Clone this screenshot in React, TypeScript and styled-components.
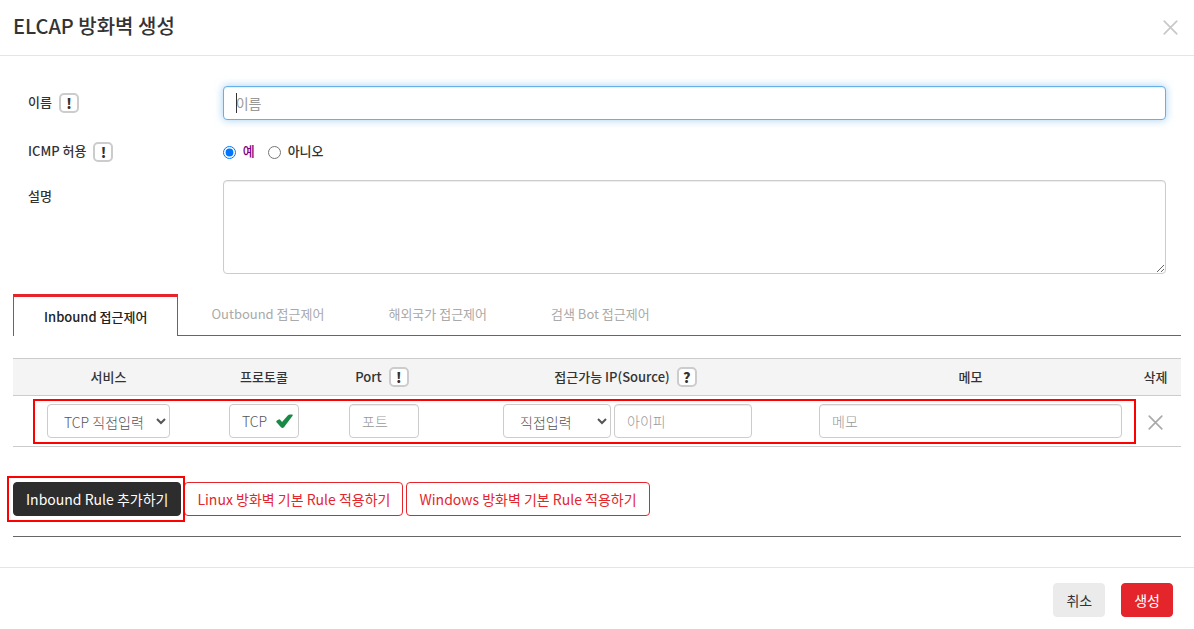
import React, { useState } from "react";
import styled, { createGlobalStyle, css } from "styled-components";

const GlobalStyle = createGlobalStyle`
  *, *::before, *::after { box-sizing: border-box; }
  body { margin: 0; background: #fff; }
  body, button, input, select, textarea {
    font-family: "Noto Sans CJK KR", "Noto Sans", sans-serif;
    color: #333;
  }
`;

const Dialog = styled.form`
  margin: 0;
  font-size: 13px;
  line-height: 20px;
`;

const Header = styled.header`
  display: flex;
  justify-content: space-between;
  align-items: flex-start;
  height: 56px;
  padding: 12px 16px 0 13px;
  border-bottom: 1px solid #e5e5e5;
`;

const Title = styled.h1`
  margin: 0;
  font-size: 20px;
  line-height: 28px;
  font-weight: 500;
`;

const IconButton = styled.button`
  display: inline-flex;
  padding: 0;
  border: 0;
  background: none;
  vertical-align: middle;
  cursor: pointer;
`;

const CloseButton = styled(IconButton)`
  margin-top: 8px;
`;

const Body = styled.main`
  padding: 30px 13px;
`;

const FormRow = styled.div<{ $gap: number }>`
  display: grid;
  grid-template-columns: 2fr 10fr;
  margin-bottom: ${(p) => p.$gap}px;
`;

const LabelCell = styled.div`
  display: flex;
  align-items: center;
  align-self: start;
  height: 34px;
  padding: 0 15px;
  gap: 7px;
  font-weight: 500;
  > :first-child { padding-bottom: 2px; }
`;

const ControlCell = styled.div`
  position: relative;
  display: flex;
  align-items: center;
  padding: 0 15px;
`;

const Badge = styled.span`
  display: inline-flex;
  align-items: center;
  justify-content: center;
  width: 20px;
  height: 20px;
  border: 2px solid #ccc;
  border-radius: 5px;
  background: #fff;
  font-size: 14px;
  line-height: 16px;
  font-weight: 900;
`;

const field = css`
  height: 34px;
  padding: 6px 12px;
  border: 1px solid #ccc;
  border-radius: 4px;
  background: #fff;
  font-size: 14px;
  line-height: 20px;
  font-weight: 300;
  color: #555;
`;

const TextField = styled.input<{ $width?: string }>`
  ${field}
  width: ${(p) => p.$width ?? "100%"};
  box-shadow: inset 0 1px 1px rgba(0, 0, 0, 0.075);
  &::placeholder { color: #999; opacity: 1; }
  &:focus {
    outline: 0;
    border-color: #66afe9;
    box-shadow: inset 0 1px 1px rgba(0, 0, 0, 0.075), 0 0 8px rgba(102, 175, 233, 0.6);
  }
`;

const NameField = styled(TextField)`
  caret-color: transparent;
  &::placeholder { color: #999; font-weight: 400; }
  &:not(:placeholder-shown) { caret-color: auto; }
`;

const Caret = styled.span`
  position: absolute;
  top: 7px;
  left: 28px;
  width: 1px;
  height: 20px;
  background: #333;
  visibility: hidden;
  pointer-events: none;
  ${NameField}:focus:placeholder-shown + & { visibility: visible; }
`;

const TextArea = styled.textarea`
  ${field}
  width: 100%;
  height: 94px;
  box-shadow: inset 0 1px 1px rgba(0, 0, 0, 0.075);
  resize: both;
`;

const Select = styled.select<{ $width: string }>`
  ${field}
  width: ${(p) => p.$width};
  padding-right: 0;
`;

const RadioGroup = styled.div`
  display: flex;
  gap: 13px;
  padding-bottom: 2px;
`;

const RadioLabel = styled.label<{ $on: boolean }>`
  display: flex;
  align-items: center;
  gap: 7px;
  font-weight: 500;
  color: ${(p) => (p.$on ? "#800080" : "#333")};
  input { width: 13px; height: 13px; margin: 2px 0 0; }
`;

const Tabs = styled.div`
  display: flex;
  align-items: flex-start;
  gap: 2px;
  height: 42px;
  margin-bottom: 22px;
  border-bottom: 1px solid #666;
`;

const Tab = styled.button<{ $active: boolean }>`
  height: ${(p) => (p.$active ? 42 : 40)}px;
  padding: 0 30px;
  border: 1px solid transparent;
  background: #fff;
  font-size: 13px;
  line-height: 20px;
  font-weight: 400;
  color: #aaa;
  cursor: pointer;
  ${(p) =>
    p.$active &&
    css`
      border: solid #666;
      border-width: 3px 1px 0;
      border-top-color: #e6252b;
      font-weight: 500;
      color: #222;
    `}
`;

const TableWrap = styled.div`
  position: relative;
  margin-bottom: 35px;
`;

const Table = styled.table`
  width: 100%;
  table-layout: fixed;
  border-collapse: separate;
  border-spacing: 0;
  text-align: center;
  th {
    height: 38px;
    padding: 0;
    border: solid #ccc;
    border-width: 1px 0;
    background: #f4f4f4;
    font-weight: 500;
  }
  td {
    height: 51px;
    padding: 0 8px;
    border-bottom: 1px solid #ccc;
  }
`;

const HeadCell = styled.span`
  display: flex;
  align-items: center;
  justify-content: center;
  gap: 7px;
  padding-right: 4px;
`;

const CellGroup = styled.div`
  display: flex;
  align-items: center;
  justify-content: center;
  gap: 3px;
`;

const Protocol = styled.span`
  ${field}
  display: inline-flex;
  align-items: center;
  justify-content: space-between;
  width: 70px;
  padding: 0 5px 0 12px;
  vertical-align: middle;
`;

const RowHighlight = styled.div`
  position: absolute;
  inset: 41px 45px 3px 20px;
  border: 2px solid #f00;
  pointer-events: none;
`;

const Actions = styled.div`
  display: flex;
  gap: 3px;
  padding-bottom: 20px;
  border-bottom: 1px solid #666;
`;

const Highlighted = styled.span`
  position: relative;
  display: inline-flex;
  &::after {
    content: "";
    position: absolute;
    inset: -6px -4px -6px -6px;
    border: 2px solid #f00;
    pointer-events: none;
    z-index: 1;
  }
`;

const tones = {
  dark: css`background: #2d2d2d; border-color: #2d2d2d; color: #fff;`,
  outline: css`background: #fff; border-color: #e4252b; color: #e4252b;`,
  plain: css`background: #ebebeb; border-color: #ebebeb; color: #333;`,
  primary: css`background: #e4252b; border-color: #e4252b; color: #fff;`,
};

const Button = styled.button<{ $tone: keyof typeof tones }>`
  height: 34px;
  padding: 0 12px;
  border: 1px solid;
  border-radius: 4px;
  font-size: 14px;
  line-height: 20px;
  font-weight: 400;
  white-space: nowrap;
  cursor: pointer;
  ${(p) => tones[p.$tone]}
`;

const Footer = styled.footer`
  display: flex;
  justify-content: flex-end;
  gap: 16px;
  padding: 15px 21px 12px;
  border-top: 1px solid #e5e5e5;
`;

const Cross = ({ size, color }: { size: number; color: string }) => (
  <svg width={size} height={size} viewBox="0 0 16 16" fill="none" stroke={color} strokeWidth="1.8" strokeLinecap="round" aria-hidden="true">
    <path d="M1.3 1.3L14.7 14.7M14.7 1.3L1.3 14.7" />
  </svg>
);

const Check = () => (
  <svg width="17" height="15" viewBox="0 0 17 15" fill="#198a45" aria-hidden="true">
    <path d="M0.9 6.6L2.8 5.4Q3.6 5.1 4.2 5.8L6 8.1L12 1.3Q12.8 0.6 13.8 0.6L16.3 0.6Q17 0.8 16.6 1.7L8.2 12.9Q6.6 14.8 5 13.2L0.5 8.3Q-0.1 7.4 0.9 6.6Z" />
  </svg>
);

const tabNames = ["Inbound 접근제어", "Outbound 접근제어", "해외국가 접근제어", "검색 Bot 접근제어"];

export default function App() {
  const [icmp, setIcmp] = useState(true);
  const [tab, setTab] = useState(0);

  return (
    <>
      <GlobalStyle />
      <Dialog onSubmit={(e) => e.preventDefault()}>
        <Header>
          <Title>ELCAP 방화벽 생성</Title>
          <CloseButton type="button" aria-label="닫기">
            <Cross size={15} color="#c8c8c8" />
          </CloseButton>
        </Header>

        <Body>
          <FormRow $gap={15}>
            <LabelCell>
              <label htmlFor="name">이름</label>
              <Badge>!</Badge>
            </LabelCell>
            <ControlCell>
              <NameField id="name" placeholder="이름" autoFocus />
              <Caret />
            </ControlCell>
          </FormRow>
          <FormRow $gap={11}>
            <LabelCell>
              <span id="icmp-label">ICMP 허용</span>
              <Badge>!</Badge>
            </LabelCell>
            <ControlCell>
              <RadioGroup role="radiogroup" aria-labelledby="icmp-label">
                <RadioLabel $on={icmp}>
                  <input type="radio" name="icmp" checked={icmp} onChange={() => setIcmp(true)} />예
                </RadioLabel>
                <RadioLabel $on={!icmp}>
                  <input type="radio" name="icmp" checked={!icmp} onChange={() => setIcmp(false)} />
                  아니오
                </RadioLabel>
              </RadioGroup>
            </ControlCell>
          </FormRow>
          <FormRow $gap={20}>
            <LabelCell>
              <label htmlFor="desc">설명</label>
            </LabelCell>
            <ControlCell>
              <TextArea id="desc" />
            </ControlCell>
          </FormRow>

          <Tabs role="tablist">
            {tabNames.map((name, i) => (
              <Tab key={name} type="button" role="tab" aria-selected={tab === i} $active={tab === i} onClick={() => setTab(i)}>
                {name}
              </Tab>
            ))}
          </Tabs>

          <TableWrap>
            <Table>
              <colgroup>
                <col style={{ width: 191 }} />
                <col style={{ width: 120 }} />
                <col style={{ width: 120 }} />
                <col style={{ width: 367 }} />
                <col />
                <col style={{ width: 51 }} />
              </colgroup>
              <thead>
                <tr>
                  <th>서비스</th>
                  <th>프로토콜</th>
                  <th><HeadCell>Port <Badge>!</Badge></HeadCell></th>
                  <th><HeadCell>접근가능 IP(Source) <Badge>?</Badge></HeadCell></th>
                  <th>메모</th>
                  <th>삭제</th>
                </tr>
              </thead>
              <tbody>
                <tr>
                  <td>
                    <Select $width="123px" aria-label="서비스"><option>TCP 직접입력</option></Select>
                  </td>
                  <td><Protocol>TCP <Check /></Protocol></td>
                  <td><TextField $width="70px" placeholder="포트" aria-label="포트" /></td>
                  <td>
                    <CellGroup>
                      <Select $width="108px" aria-label="접근가능 IP"><option>직접입력</option></Select>
                      <TextField $width="138px" placeholder="아이피" aria-label="아이피" />
                    </CellGroup>
                  </td>
                  <td><TextField placeholder="메모" aria-label="메모" /></td>
                  <td>
                    <IconButton type="button" aria-label="삭제"><Cross size={15} color="#aaa" /></IconButton>
                  </td>
                </tr>
              </tbody>
            </Table>
            <RowHighlight />
          </TableWrap>

          <Actions>
            <Highlighted>
              <Button type="button" $tone="dark">Inbound Rule 추가하기</Button>
            </Highlighted>
            <Button type="button" $tone="outline">Linux 방화벽 기본 Rule 적용하기</Button>
            <Button type="button" $tone="outline">Windows 방화벽 기본 Rule 적용하기</Button>
          </Actions>
        </Body>

        <Footer>
          <Button type="button" $tone="plain">취소</Button>
          <Button type="submit" $tone="primary">생성</Button>
        </Footer>
      </Dialog>
    </>
  );
}
